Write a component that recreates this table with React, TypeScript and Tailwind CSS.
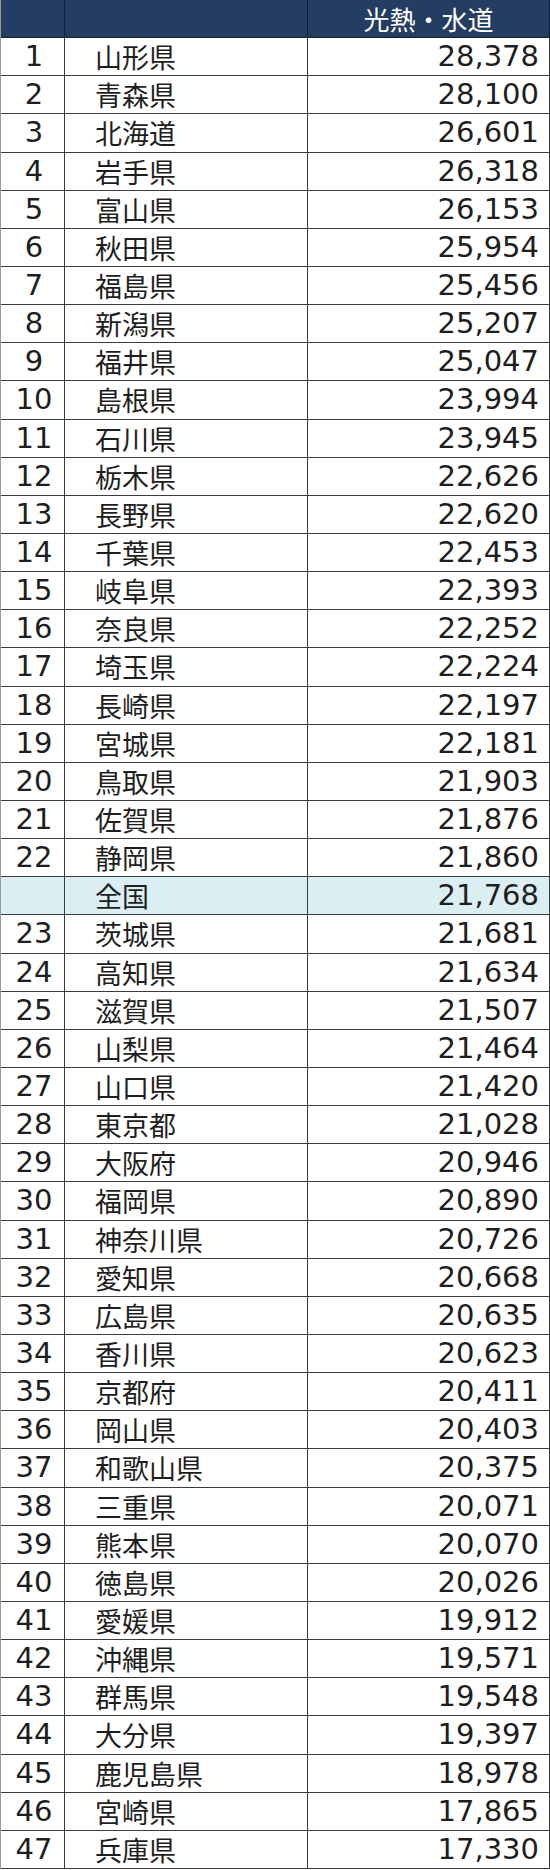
const ROWS: [string, string, string][] = [
  ["1", "山形県", "28,378"],
  ["2", "青森県", "28,100"],
  ["3", "北海道", "26,601"],
  ["4", "岩手県", "26,318"],
  ["5", "富山県", "26,153"],
  ["6", "秋田県", "25,954"],
  ["7", "福島県", "25,456"],
  ["8", "新潟県", "25,207"],
  ["9", "福井県", "25,047"],
  ["10", "島根県", "23,994"],
  ["11", "石川県", "23,945"],
  ["12", "栃木県", "22,626"],
  ["13", "長野県", "22,620"],
  ["14", "千葉県", "22,453"],
  ["15", "岐阜県", "22,393"],
  ["16", "奈良県", "22,252"],
  ["17", "埼玉県", "22,224"],
  ["18", "長崎県", "22,197"],
  ["19", "宮城県", "22,181"],
  ["20", "鳥取県", "21,903"],
  ["21", "佐賀県", "21,876"],
  ["22", "静岡県", "21,860"],
  ["", "全国", "21,768"],
  ["23", "茨城県", "21,681"],
  ["24", "高知県", "21,634"],
  ["25", "滋賀県", "21,507"],
  ["26", "山梨県", "21,464"],
  ["27", "山口県", "21,420"],
  ["28", "東京都", "21,028"],
  ["29", "大阪府", "20,946"],
  ["30", "福岡県", "20,890"],
  ["31", "神奈川県", "20,726"],
  ["32", "愛知県", "20,668"],
  ["33", "広島県", "20,635"],
  ["34", "香川県", "20,623"],
  ["35", "京都府", "20,411"],
  ["36", "岡山県", "20,403"],
  ["37", "和歌山県", "20,375"],
  ["38", "三重県", "20,071"],
  ["39", "熊本県", "20,070"],
  ["40", "徳島県", "20,026"],
  ["41", "愛媛県", "19,912"],
  ["42", "沖縄県", "19,571"],
  ["43", "群馬県", "19,548"],
  ["44", "大分県", "19,397"],
  ["45", "鹿児島県", "18,978"],
  ["46", "宮崎県", "17,865"],
  ["47", "兵庫県", "17,330"],
];

const num = "font-['DejaVu_Sans','Noto_Sans_CJK_JP',sans-serif] text-[29px] leading-none";
const jp = "font-['Noto_Sans_CJK_JP',sans-serif] text-[27px] leading-none";

export default function App() {
  return (
    <div className="w-[550px] h-[1870px] bg-white">
      <div className="w-[549px] h-[1869px] grid grid-cols-[64px_243px_242px] grid-rows-[repeat(49,minmax(0,1fr))] border-l border-[#9a9a9a] text-[#1e1e1e]">
        {/* Header */}
        <div className="bg-[#243d62] border-r border-b border-[#0f1e33]" />
        <div className="bg-[#243d62] border-r border-b border-[#0f1e33]" />
        <div className="bg-[#243d62] border-r border-b border-[#0f1e33] flex items-center justify-center">
          <span className="font-['Noto_Sans_CJK_JP',sans-serif] text-[26px] leading-none text-white">光熱・水道</span>
        </div>

        {ROWS.map(([rank, name, value]) => {
          const bg = rank === "" ? "bg-[#dbeef4]" : "bg-white";
          return (
            <div key={name} className="contents">
              <div className={`${bg} border-r border-b border-[#3c3c3c] flex items-center justify-center pl-[3px] ${num}`}>
                {rank}
              </div>
              <div className={`${bg} border-r border-b border-[#3c3c3c] flex items-center pl-[30px] ${jp}`}>
                {name}
              </div>
              <div className={`${bg} border-r border-b border-[#3c3c3c] flex items-center justify-end pr-[10px] ${num}`}>
                {value}
              </div>
            </div>
          );
        })}
      </div>
    </div>
  );
}
